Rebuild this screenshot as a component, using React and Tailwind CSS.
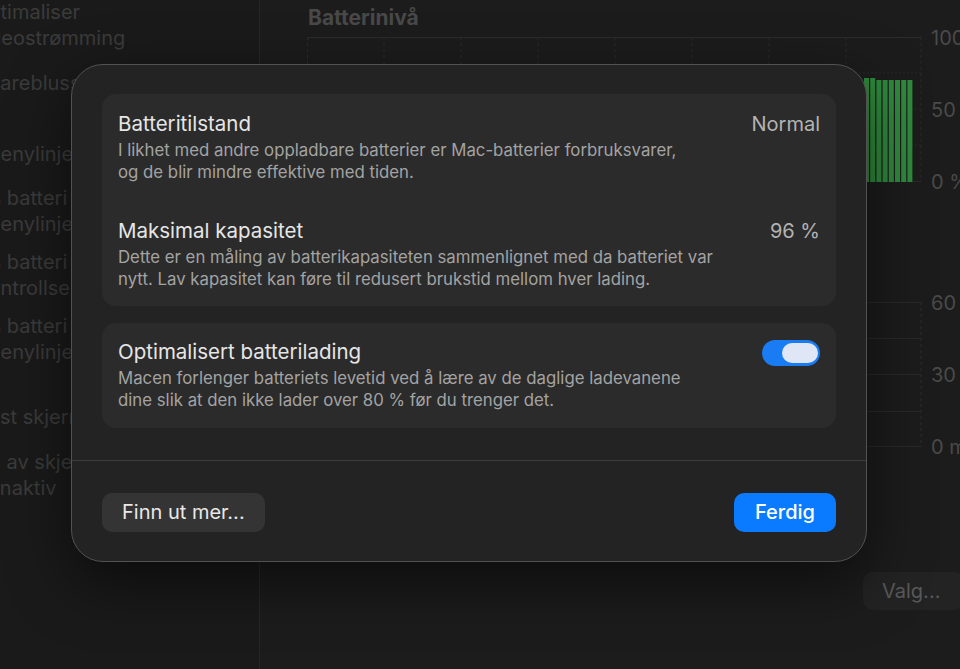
import React from "react";

const sidebar = [
  { t: "Optimaliser", ml: "-ml-[27px]", mt: "mt-[-1px]" },
  { t: "videostrømming", ml: "-ml-[27px]", mt: "" },
  { t: "Farebluss", ml: "-ml-[11px]", mt: "mt-[19px]" },
  { t: "menylinje", ml: "-ml-[17px]", mt: "mt-[45px]" },
  { t: "Vis batteri", ml: "-ml-[28px]", mt: "mt-[18px]" },
  { t: "menylinje", ml: "-ml-[17px]", mt: "" },
  { t: "Vis batteri", ml: "-ml-[28px]", mt: "mt-[12px]" },
  { t: "kontrollsenter", ml: "-ml-[22px]", mt: "" },
  { t: "Vis batteri", ml: "-ml-[28px]", mt: "mt-[12px]" },
  { t: "menylinje", ml: "-ml-[17px]", mt: "" },
  { t: "Test skjerm", ml: "-ml-[23px]", mt: "mt-[39px]" },
  { t: "Slå av skjerm", ml: "-ml-[28px]", mt: "mt-[19px]" },
  { t: "inaktiv", ml: "-ml-[5px]", mt: "" },
];

function Chart1() {
  const vx = [0.5, 77, 154, 231, 308, 385, 462, 539, 614];
  return (
    <svg width="616" height="146" className="block shrink-0">
      <line x1="0" y1="0.5" x2="614" y2="0.5" stroke="#2c2c2c" />
      {[36, 72, 108].map((y) => (
        <line key={y} x1="0" y1={y} x2="614" y2={y} stroke="#292929" strokeDasharray="2 2" />
      ))}
      <line x1="0" y1="144.5" x2="614" y2="144.5" stroke="#2a2a2a" />
      {vx.map((x) => (
        <line key={x} x1={x} y1="0" x2={x} y2="145" stroke="#2b2b2b" strokeDasharray="3 3" />
      ))}
      {Array.from({ length: 8 }).map((_, i) => (
        <rect key={i} x={557 + i * 6.2} y={i < 2 ? 41 : 43} width="5" height={i < 2 ? 104 : 102} fill="#2f8a3c" />
      ))}
    </svg>
  );
}

function Chart2() {
  return (
    <svg width="616" height="146" className="block shrink-0">
      {[0.5, 36.5, 72.5, 109.5, 144.5].map((y) => (
        <line key={y} x1="0" y1={y} x2="614" y2={y} stroke="#292929" />
      ))}
      {[0.5, 77, 154, 231, 308, 385, 462, 539].map((x) => (
        <line key={x} x1={x} y1="0" x2={x} y2="145" stroke="#242424" strokeDasharray="3 3" />
      ))}
      <line x1="614" y1="0" x2="614" y2="145" stroke="#2c2c2c" strokeDasharray="3 3" />
    </svg>
  );
}

function Row({ title, value, desc, children, pt = "pt-[18px]", pb = "pb-[17px]" }) {
  return (
    <div className={`flex items-start justify-between px-[16px] ${pt} ${pb}`}>
      <div className="flex flex-col gap-[4px]">
        <div className="text-[20.5px] leading-[24px] text-[#e6e6e6]">{title}</div>
        <div className="text-[16.8px] leading-[21.5px] text-[#a3a3a3] whitespace-nowrap">
          {desc.map((d, i) => (
            <div key={i}>{d}</div>
          ))}
        </div>
      </div>
      {value && <div className="text-[20px] leading-[24px] text-[#b3b3b3]">{value}</div>}
      {children}
    </div>
  );
}

export default function App() {
  return (
    <div className="relative w-[960px] h-[669px] overflow-hidden bg-[#1c1c1c] flex font-['Inter','Noto_Sans',sans-serif]">
      <aside className="w-[260px] shrink-0 h-full bg-[#1a1a1a] border-r border-[#272727] overflow-hidden flex flex-col text-[20px] leading-[26px] text-[#3b3b3b]">
        {sidebar.map((s, i) => (
          <div key={i} className={`whitespace-nowrap ${s.ml} ${s.mt}`}>
            {s.t}
          </div>
        ))}
      </aside>

      <main className="flex-1 flex flex-col pl-[47px] pt-[6px] overflow-hidden">
        <div className="ml-[1px] text-[21px] leading-[24px] font-bold text-[#494949]">Batterinivå</div>
        <div className="mt-[7px] flex h-[146px]">
          <Chart1 />
          <div className="ml-[8px] -mt-[9px] h-[164px] flex flex-col justify-between text-[20px] leading-[20px] text-[#4a4a4a] whitespace-nowrap">
            <div>100 %</div>
            <div>50 %</div>
            <div>0 %</div>
          </div>
        </div>
        <div className="h-[119px] shrink-0" />
        <div className="flex h-[146px]">
          <Chart2 />
          <div className="ml-[8px] -mt-[9px] h-[164px] flex flex-col justify-between text-[20px] leading-[20px] text-[#4a4a4a] whitespace-nowrap">
            <div>60 min</div>
            <div>30 min</div>
            <div>0 min</div>
          </div>
        </div>
        <div className="mt-[124px] flex justify-end -mr-[4px]">
          <div className="w-[101px] h-[38px] rounded-[10px] bg-[#232323] pl-[19px] text-[20px] leading-[38px] text-[#595959]">
            Valg...
          </div>
        </div>
      </main>

      <div className="absolute left-[71px] top-[64px] w-[796px] h-[498px] rounded-[32px] bg-[#232323] border border-[#525252] shadow-[0_20px_60px_rgba(0,0,0,0.55)] flex flex-col">
        <div className="px-[30px] pt-[29px] pb-[32px] flex flex-col gap-[17px]">
          <div className="h-[212px] rounded-[14px] bg-[#2b2b2b] flex flex-col">
            <Row
              title="Batteritilstand"
              value="Normal"
              desc={[
                "I likhet med andre oppladbare batterier er Mac-batterier forbruksvarer,",
                "og de blir mindre effektive med tiden.",
              ]}
            />
            <div className="mx-[16px] h-px bg-[#3a3a3a]" />
            <Row
              title="Maksimal kapasitet"
              value="96 %"
              pt="pt-[19px]"
              desc={[
                "Dette er en måling av batterikapasiteten sammenlignet med da batteriet var",
                "nytt. Lav kapasitet kan føre til redusert brukstid mellom hver lading.",
              ]}
            />
          </div>
          <div className="h-[105px] rounded-[14px] bg-[#2b2b2b]">
            <Row
              title="Optimalisert batterilading"
              pt="pt-[17px]"
              desc={[
                "Macen forlenger batteriets levetid ved å lære av de daglige ladevanene",
                "dine slik at den ikke lader over 80 % før du trenger det.",
              ]}
            >
              <div className="w-[58px] h-[26px] rounded-full bg-[#1a7cf2] flex items-center justify-end pr-[2px]">
                <div className="w-[36px] h-[20px] rounded-full bg-[#dfe7f7]" />
              </div>
            </Row>
          </div>
        </div>
        <div className="h-px bg-[#3d3d3d]" />
        <div className="px-[30px] pt-[32px] flex justify-between">
          <div className="h-[39px] w-[163px] rounded-[10px] bg-[#343434] pl-[20px] text-[20px] leading-[39px] text-[#e8e8e8]">
            Finn ut mer...
          </div>
          <div className="h-[39px] w-[102px] rounded-[10px] bg-[#0a7aff] text-center text-[20px] leading-[39px] font-medium text-white">
            Ferdig
          </div>
        </div>
      </div>
    </div>
  );
}
